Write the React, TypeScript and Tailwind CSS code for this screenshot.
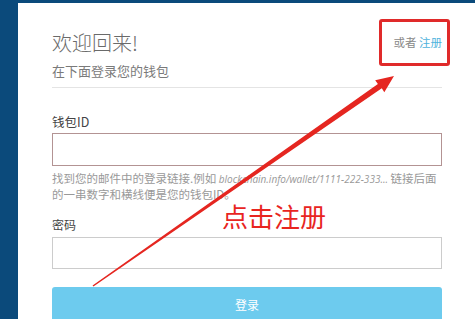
import React from "react";

const cjk = '"Noto Sans CJK SC", "Noto Sans", sans-serif';

export default function App() {
  return (
    <div
      className="relative w-[475px] h-[319px] overflow-hidden bg-[#0b4a7b] pt-[3px] pl-[18px]"
      style={{ fontFamily: cjk }}
    >
      <div className="h-full bg-white pl-[34px] pr-[33px] pt-[26px]">
        {/* 标题 */}
        <div className="flex justify-between">
          <div>
            <h1 className="text-[20px] leading-[28px] text-[#6a6a6a] font-light">欢迎回来!</h1>
            <p className="mt-[4px] text-[13px] leading-[20px] text-[#7a7a7a]">在下面登录您的钱包</p>
          </div>
          <div className="relative pt-[5px] text-[11.5px] leading-[16px] text-[#888]">
            或者 <span className="text-[#4fb3dc]">注册</span>
            <div className="absolute left-[-14px] top-[-10px] w-[71px] h-[47px] rounded-[3px] border-[3px] border-[#e02a2a]" />
          </div>
        </div>
        <div className="mt-[6px] border-t border-[#e4e4e4]" />

        {/* 表单 */}
        <label className="mt-[24px] block text-[12.5px] leading-[20px] text-[#444]">钱包ID</label>
        <input className="mt-[1px] block w-full h-[33px] border border-[#b39393] outline-none" />
        <p className="mt-[5px] text-[11.5px] leading-[15px] text-[#999] whitespace-nowrap">
          找到您的邮件中的登录链接.例如{" "}
          <span className="italic text-[10px]" style={{ fontFamily: '"Open Sans", sans-serif' }}>
            blockchain.info/wallet/1111-222-333...
          </span>{" "}
          链接后面
          <br />
          的一串数字和横线便是您的钱包ID。
        </p>

        <label className="mt-[13px] block text-[12px] leading-[20px] text-[#444]">密码</label>
        <input
          type="password"
          className="mt-[2px] block w-full h-[32px] border border-[#cccccc] outline-none"
        />

        <button className="mt-[18px] w-full h-[36px] rounded-[3px] bg-[#6dcbee] text-white text-[12px]">
          登录
        </button>
      </div>

      {/* 标注 */}
      <div className="absolute left-[222px] top-[199px] text-[26px] leading-[34px] text-[#e8251f]">
        点击注册
      </div>
      <svg className="absolute left-0 top-0" width="475" height="319" viewBox="0 0 475 319">
        <polygon
          fill="#e52620"
          points="92.57,285.38 377.9,84.1 375.2,80.3 394,76 384.3,92.2 381.8,88.3 93.43,286.62"
        />
      </svg>
    </div>
  );
}
